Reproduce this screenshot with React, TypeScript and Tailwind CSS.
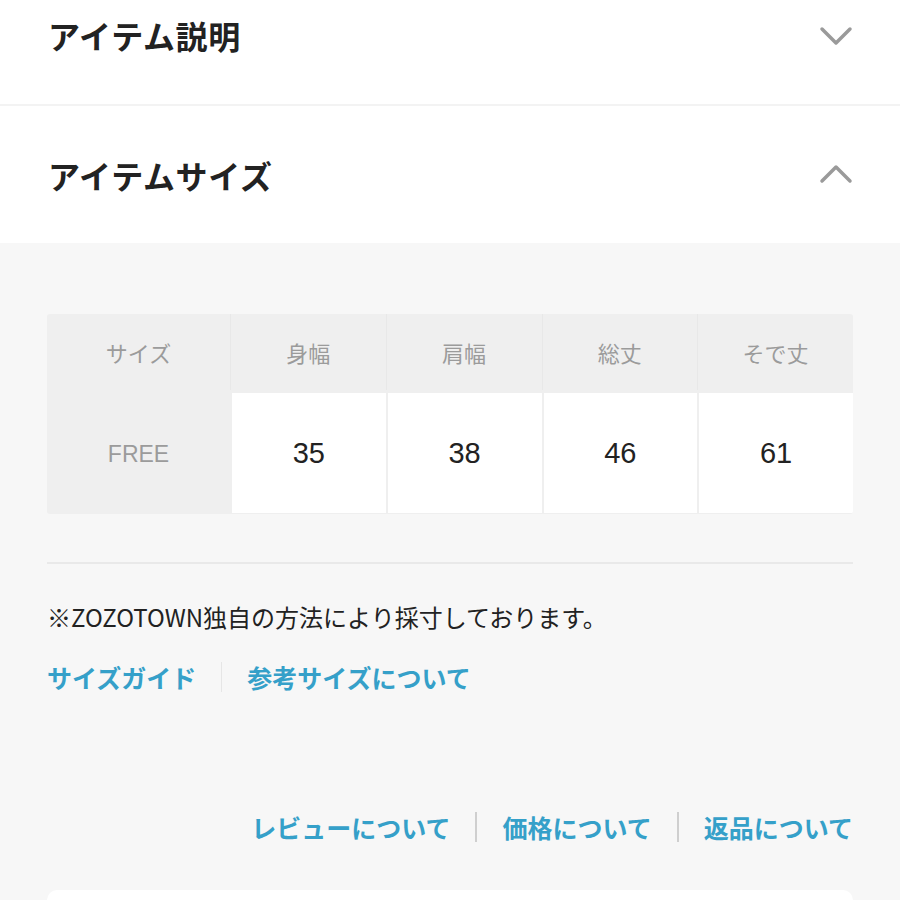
import React from 'react';

const font = { fontFamily: '"Noto Sans CJK JP", "Noto Sans", sans-serif' };

function Chevron({ up }: { up?: boolean }) {
  return (
    <svg width="34" height="20" viewBox="0 0 34 20" className="shrink-0">
      <path
        d={up ? 'M3 17 L17 3 L31 17' : 'M3 3 L17 17 L31 3'}
        fill="none"
        stroke="#9a9a9a"
        strokeWidth="3.5"
        strokeLinecap="round"
        strokeLinejoin="round"
      />
    </svg>
  );
}

const heads = ['身幅', '肩幅', '総丈', 'そで丈'];
const values = ['35', '38', '46', '61'];

export default function App() {
  return (
    <div className="min-h-[900px] w-[900px] overflow-hidden bg-[#f7f7f7]" style={font}>
      <section className="bg-white">
        <div className="flex h-[106px] items-start justify-between border-b-2 border-[#f3f3f3] pl-[48px] pr-[47px] pt-[12px]">
          <h2 className="text-[32px] font-bold leading-[46px] tracking-[0.7px] text-[#222]">アイテム説明</h2>
          <div className="pt-[14px]"><Chevron /></div>
        </div>
        <div className="flex h-[137px] items-center justify-between pl-[48px] pr-[47px]">
          <h2 className="text-[32px] font-bold leading-[46px] tracking-[0.7px] text-[#222]">アイテムサイズ</h2>
          <div className="pb-[2px]"><Chevron up /></div>
        </div>
      </section>

      <section className="px-[47px] pt-[71px]">
        <div className="overflow-hidden rounded-[3px] bg-[#efefef]">
          <div className="grid h-[79px] grid-cols-[183px_1fr_1fr_1fr_1fr] items-center pb-[3px] text-[22px] text-[#9b9b9b]">
            <div className="text-center">サイズ</div>
            {heads.map((h) => (
              <div key={h} className="flex h-full items-center justify-center border-l border-[#e8e8e8]">
                {h}
              </div>
            ))}
          </div>
          <div className="grid h-[121px] grid-cols-[183px_1fr_1fr_1fr_1fr] gap-x-[2px] pb-[1px]">
            <div className="flex items-center justify-center pt-[2px] text-[23px] text-[#9b9b9b]" style={{ fontFamily: '"Liberation Sans", sans-serif' }}>FREE</div>
            {values.map((v) => (
              <div
                key={v}
                className="flex items-center justify-center bg-white pt-[2px] text-[29px] text-[#222]"
                style={{ fontFamily: '"Liberation Sans", sans-serif' }}
              >
                {v}
              </div>
            ))}
          </div>
        </div>

        <div className="mt-[48px] h-[2px] bg-[#e9e9e9]" />

        <p className="mt-[36px] text-[24px] leading-[34px] text-[#222]">※ZOZOTOWN独自の方法により採寸しております。</p>

        <div className="mt-[26px] flex items-center text-[25px] font-bold leading-[34px] text-[#35a0c9]">
          <span>サイズガイド</span>
          <span className="mx-[25px] h-[30px] w-[1px] bg-[#e6e6e6]" />
          <span>参考サイズについて</span>
        </div>

        <div className="mt-[115px] flex items-center justify-end text-[25px] font-bold leading-[36px] text-[#35a0c9]">
          <span>レビューについて</span>
          <span className="mx-[25px] h-[30px] w-[2px] bg-[#cfcfcf]" />
          <span>価格について</span>
          <span className="mx-[25px] h-[30px] w-[2px] bg-[#cfcfcf]" />
          <span>返品について</span>
        </div>

        <div className="mt-[45px] h-[40px] rounded-t-[10px] bg-white" />
      </section>
    </div>
  );
}
